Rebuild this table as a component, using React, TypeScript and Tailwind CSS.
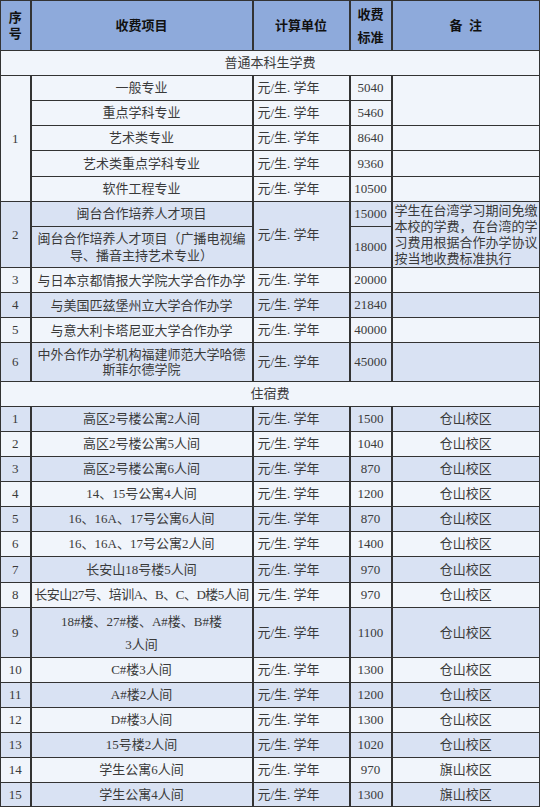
import React from 'react';

type Tone = 'blue' | 'light';

const BLUE = 'bg-[#d9e2f3]';
const LIGHT = 'bg-[#f1f5fb]';

const cell = 'border-y border-x-2 border-[#333333] p-0 text-center align-middle';

// 住宿费 rows: [序号, 项目, 标准, 校区, 高度]
const dormRows: [string, string, string, string, number][] = [
  ['1', '高区2号楼公寓2人间', '1500', '仓山校区', 25],
  ['2', '高区2号楼公寓5人间', '1040', '仓山校区', 25],
  ['3', '高区2号楼公寓6人间', '870', '仓山校区', 25],
  ['4', '14、15号公寓4人间', '1200', '仓山校区', 25],
  ['5', '16、16A、17号公寓6人间', '870', '仓山校区', 25],
  ['6', '16、16A、17号公寓2人间', '1400', '仓山校区', 25],
  ['7', '长安山18号楼5人间', '970', '仓山校区', 26],
  ['8', '长安山27号、培训A、B、C、D楼5人间', '970', '仓山校区', 25],
  ['9', '18#楼、27#楼、A#楼、B#楼\n3人间', '1100', '仓山校区', 50],
  ['10', 'C#楼3人间', '1300', '仓山校区', 25],
  ['11', 'A#楼2人间', '1200', '仓山校区', 25],
  ['12', 'D#楼3人间', '1300', '仓山校区', 25],
  ['13', '15号楼2人间', '1020', '仓山校区', 25],
  ['14', '学生公寓6人间', '970', '旗山校区', 25],
  ['15', '学生公寓4人间', '1300', '旗山校区', 24],
];

const coopRows: [string, string, string, Tone, number, string[]][] = [
  ['3', '与日本京都情报大学院大学合作办学', '20000', 'light', 25, []],
  ['4', '与美国匹兹堡州立大学合作办学', '21840', 'blue', 25, []],
  ['5', '与意大利卡塔尼亚大学合作办学', '40000', 'light', 25, []],
  ['6', '中外合作办学机构福建师范大学哈德', '45000', 'blue', 39, ['斯菲尔德学院']],
];

const majors: [string, string, number][] = [
  ['一般专业', '5040', 25],
  ['重点学科专业', '5460', 25],
  ['艺术类专业', '8640', 25],
  ['艺术类重点学科专业', '9360', 26],
  ['软件工程专业', '10500', 25],
];

const Unit = () => <div className="pl-[4px] text-left whitespace-nowrap">元/生. 学年</div>;

const SectionRow = ({ title }: { title: string }) => (
  <tr className={LIGHT}>
    <td colSpan={5} className="border border-[#333333] p-0 text-center h-[25px]">
      {title}
    </td>
  </tr>
);

export default function App() {
  return (
    <div className="bg-white w-[540px] h-[808px]">
      <table
        className="table-fixed border-collapse w-[539px] text-[13px] leading-[14px] text-[#3a3a3a]"
        style={{ fontFamily: '"Liberation Serif", "Noto Sans CJK SC", serif' }}
      >
        <colgroup>
          <col className="w-[30px]" />
          <col className="w-[222px]" />
          <col className="w-[97px]" />
          <col className="w-[42px]" />
          <col className="w-[148px]" />
        </colgroup>
        <thead>
          <tr className="bg-[#8eaadb] text-[#111111] font-bold">
            <th className={`${cell} border-l h-[50px] leading-[16px]`}>
              序<br />号
            </th>
            <th className={cell}>收费项目</th>
            <th className={cell}>计算单位</th>
            <th className={`${cell} leading-[23px]`}>
              收费<br />标准
            </th>
            <th className={`${cell} border-r`}>备&nbsp;&nbsp;注</th>
          </tr>
        </thead>
        <tbody>
          <SectionRow title="普通本科生学费" />

          {majors.map(([name, fee, h], i) => (
            <tr key={name} className={LIGHT} style={{ height: h }}>
              {i === 0 && (
                <td rowSpan={5} className={`${cell} border-l`}>
                  1
                </td>
              )}
              <td className={cell}>{name}</td>
              <td className={cell}>
                <Unit />
              </td>
              <td className={cell}>{fee}</td>
              {i === 0 && <td rowSpan={2} className={`${cell} border-r`} />}
              {i >= 2 && <td className={`${cell} border-r`} />}
            </tr>
          ))}

          <tr className={BLUE} style={{ height: 25 }}>
            <td rowSpan={2} className={`${cell} border-l`}>
              2
            </td>
            <td className={cell}>闽台合作培养人才项目</td>
            <td rowSpan={2} className={cell}>
              <Unit />
            </td>
            <td className={cell}>15000</td>
            <td rowSpan={2} className={`${cell} border-r text-left leading-[16px] px-[2px]`}>
              <div className="whitespace-nowrap">学生在台湾学习期间免缴</div>
              <div className="whitespace-nowrap">本校的学费，在台湾的学</div>
              <div className="whitespace-nowrap">习费用根据合作办学协议</div>
              <div className="whitespace-nowrap">按当地收费标准执行</div>
            </td>
          </tr>
          <tr className={BLUE} style={{ height: 41 }}>
            <td className={`${cell} leading-[17px]`}>
              闽台合作培养人才项目（广播电视编
              <br />
              导、播音主持艺术专业）
            </td>
            <td className={cell}>18000</td>
          </tr>

          {coopRows.map(([no, name, fee, tone, h, more]) => (
            <tr key={no} className={tone === 'blue' ? BLUE : LIGHT} style={{ height: h }}>
              <td className={`${cell} border-l`}>{no}</td>
              <td className={`${cell} leading-[15px]`}>
                {name}
                {more.map((m) => (
                  <div key={m}>{m}</div>
                ))}
              </td>
              <td className={cell}>
                <Unit />
              </td>
              <td className={cell}>{fee}</td>
              <td className={`${cell} border-r`} />
            </tr>
          ))}

          <SectionRow title="住宿费" />

          {dormRows.map(([no, name, fee, campus, h], i) => (
            <tr key={no} className={i % 2 === 0 ? BLUE : LIGHT} style={{ height: h }}>
              <td className={`${cell} border-l`}>{no}</td>
              <td className={`${cell} whitespace-nowrap ${no === '8' ? 'tracking-[-0.5px]' : ''}`}>
                {name.split('\n').map((line) => (
                  <div key={line} className={name.includes('\n') ? 'leading-[23px]' : ''}>
                    {line}
                  </div>
                ))}
              </td>
              <td className={cell}>
                <Unit />
              </td>
              <td className={cell}>{fee}</td>
              <td className={`${cell} border-r`}>{campus}</td>
            </tr>
          ))}
        </tbody>
      </table>
    </div>
  );
}
